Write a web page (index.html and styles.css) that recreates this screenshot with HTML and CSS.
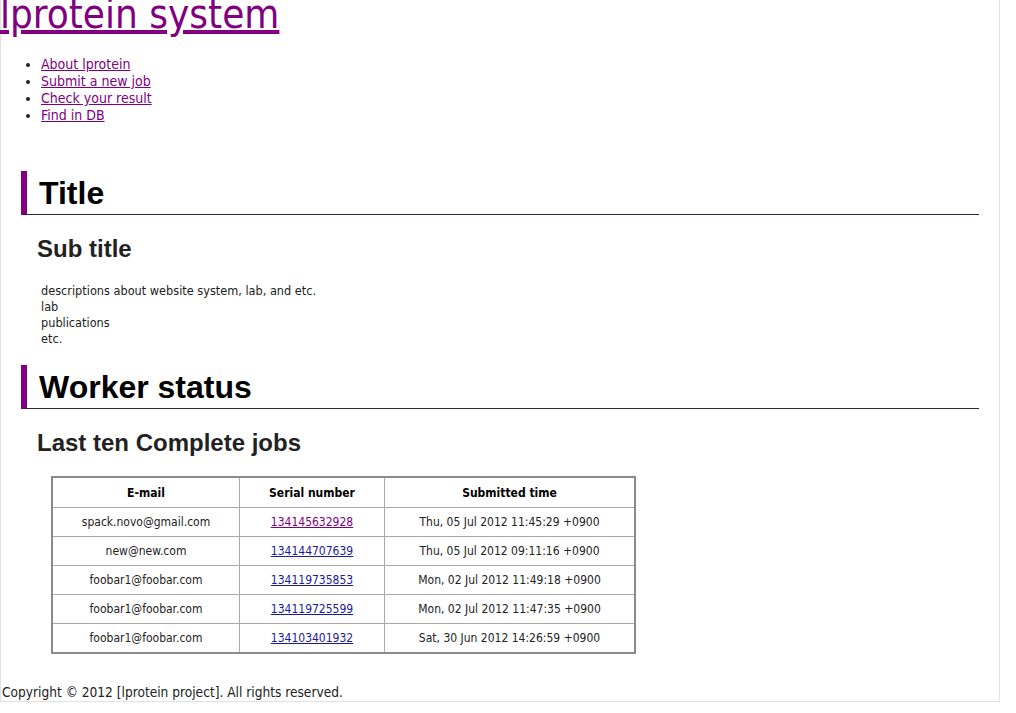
FILE: index.html
```html
<!DOCTYPE html>
<html>
<head>
<meta charset="utf-8">
<title>lprotein system</title>
<link rel="stylesheet" href="styles.css">
</head>
<body>
<div class="page">
  <header class="site-header">
    <h1 class="logo"><a href="#" class="visited">lprotein system</a></h1>
    <ul class="nav">
      <li><a href="#" class="visited">About lprotein</a></li>
      <li><a href="#" class="visited">Submit a new job</a></li>
      <li><a href="#" class="visited">Check your result</a></li>
      <li><a href="#" class="visited">Find in DB</a></li>
    </ul>
  </header>

  <section class="block">
    <h2 class="bar-title">Title</h2>
    <h3 class="sub-title">Sub title</h3>
    <p class="desc">descriptions about website system, lab, and etc.<br>lab<br>publications<br>etc.</p>
  </section>

  <section class="block">
    <h2 class="bar-title">Worker status</h2>
    <h3 class="sub-title">Last ten Complete jobs</h3>
    <table class="jobs">
      <thead>
        <tr><th class="c-mail">E-mail</th><th class="c-serial">Serial number</th><th class="c-time">Submitted time</th></tr>
      </thead>
      <tbody>
        <tr><td>spack.novo@gmail.com</td><td><a href="#" class="visited">134145632928</a></td><td>Thu, 05 Jul 2012 11:45:29 +0900</td></tr>
        <tr><td>new@new.com</td><td><a href="#" class="plain">134144707639</a></td><td>Thu, 05 Jul 2012 09:11:16 +0900</td></tr>
        <tr><td>foobar1@foobar.com</td><td><a href="#" class="plain">134119735853</a></td><td>Mon, 02 Jul 2012 11:49:18 +0900</td></tr>
        <tr><td>foobar1@foobar.com</td><td><a href="#" class="plain">134119725599</a></td><td>Mon, 02 Jul 2012 11:47:35 +0900</td></tr>
        <tr><td>foobar1@foobar.com</td><td><a href="#" class="plain">134103401932</a></td><td>Sat, 30 Jun 2012 14:26:59 +0900</td></tr>
      </tbody>
    </table>
  </section>

  <footer class="footer">Copyright © 2012 [lprotein project]. All rights reserved.</footer>
</div>
</body>
</html>
```
FILE: styles.css
```css
html, body {
  margin: 0;
  padding: 0;
  background: #fff;
}
body {
  font-family: "DejaVu Sans Condensed", "DejaVu Sans", sans-serif;
  color: #222;
}
.page {
  display: flow-root;
  width: 1000px;
  height: 702px;
  box-sizing: border-box;
  border-left: 1px solid #e2e2e2;
  border-right: 1px solid #e2e2e2;
  border-bottom: 1px solid #e2e2e2;
}
a.visited { color: #800080; }
a.plain { color: #1a1a9c; }

.logo {
  margin: -6px 0 0 -1px;
  font-size: 40px;
  font-weight: normal;
  line-height: 40px;
}
.nav {
  margin: 22px 0 0 0;
  padding-left: 40px;
  font-size: 14px;
  line-height: 17px;
}
.block {
  padding-top: 47px;
}
.block + .block { padding-top: 18px; }
.bar-title {
  margin: 0 20px 0 20px;
  padding: 1px 0 0 12px;
  border-left: 6px solid #800080;
  border-bottom: 1px solid #3c1e3c;
  font-family: "Liberation Sans", Arial, sans-serif;
  font-weight: bold;
  font-size: 32px;
  line-height: 42px;
  color: #000;
}
.sub-title {
  margin: 19px 0 0 36px;
  font-family: "Liberation Sans", Arial, sans-serif;
  font-weight: bold;
  font-size: 24px;
  line-height: 30px;
  color: #222;
}
.desc {
  margin: 19px 0 0 40px;
  font-size: 12.6px;
  line-height: 16px;
}
.jobs {
  margin: 18px 0 0 50px;
  border-collapse: collapse;
  border: 2px solid #8a8a8a;
  font-size: 12px;
  color: #222;
}
.jobs th, .jobs td {
  border: 1px solid #a8a8a8;
  text-align: center;
  height: 28px;
  padding: 0;
}
.jobs th {
  color: #000;
  font-weight: bold;
  height: 29px;
}
.c-mail { width: 186px; }
.c-serial { width: 144px; }
.c-time { width: 249px; }
.footer {
  margin-top: 30px;
  padding-left: 1px;
  font-size: 13.6px;
  line-height: 17px;
}
```
